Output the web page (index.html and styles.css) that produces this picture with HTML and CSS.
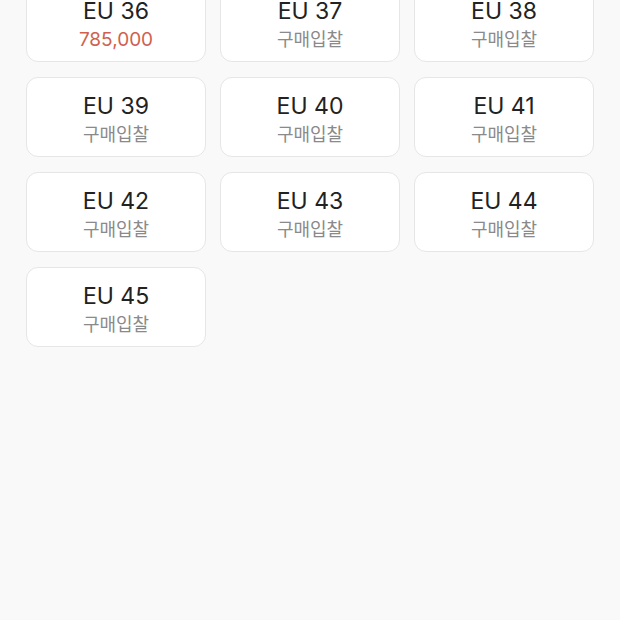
FILE: index.html
```html
<!DOCTYPE html>
<html lang="ko">
  <head>
    <meta charset="UTF-8" />
    <meta name="viewport" content="width=device-width, initial-scale=1.0" />
    <title>사이즈 선택</title>
    <link rel="stylesheet" href="styles.css">
  </head>
  <body>
    <div class="size-grid">
      <div class="size-card">
        <div class="size-name">EU 36</div>
        <div class="size-price sold">785,000</div>
      </div>
      <div class="size-card">
        <div class="size-name">EU 37</div>
        <div class="size-price">구매입찰</div>
      </div>
      <div class="size-card">
        <div class="size-name">EU 38</div>
        <div class="size-price">구매입찰</div>
      </div>
      <div class="size-card">
        <div class="size-name">EU 39</div>
        <div class="size-price">구매입찰</div>
      </div>
      <div class="size-card">
        <div class="size-name">EU 40</div>
        <div class="size-price">구매입찰</div>
      </div>
      <div class="size-card">
        <div class="size-name">EU 41</div>
        <div class="size-price">구매입찰</div>
      </div>
      <div class="size-card">
        <div class="size-name">EU 42</div>
        <div class="size-price">구매입찰</div>
      </div>
      <div class="size-card">
        <div class="size-name">EU 43</div>
        <div class="size-price">구매입찰</div>
      </div>
      <div class="size-card">
        <div class="size-name">EU 44</div>
        <div class="size-price">구매입찰</div>
      </div>
      <div class="size-card">
        <div class="size-name">EU 45</div>
        <div class="size-price">구매입찰</div>
      </div>
    </div>
  </body>
</html>
```

FILE: styles.css
```css
body {
  margin: 0;
  background-color: #f9f9f9;
  font-family: Inter, "Noto Sans CJK KR", sans-serif;
}

/* scrolled list: first row partly above the top */
.size-grid {
  display: grid;
  grid-template-columns: repeat(3, 1fr);
  column-gap: 14px;
  row-gap: 15px;
  padding: 0 26px;
  margin-top: -18px;
}

.size-card {
  background-color: #fff;
  border: 1px solid #e6e6e6;
  border-radius: 12px;
  padding: 15px 0 10px;
  text-align: center;
}

.size-name {
  font-size: 23px;
  line-height: 26px;
  color: #222;
}

.size-price {
  font-family: "Noto Sans CJK KR", sans-serif;
  font-size: 18px;
  line-height: 26px;
  margin-top: 1px;
  color: #8a8a8a;
}

.size-price.sold {
  font-family: Inter, sans-serif;
  font-size: 19px;
  margin-top: 3px;
  margin-bottom: -2px;
  color: #d0614e;
}
```
